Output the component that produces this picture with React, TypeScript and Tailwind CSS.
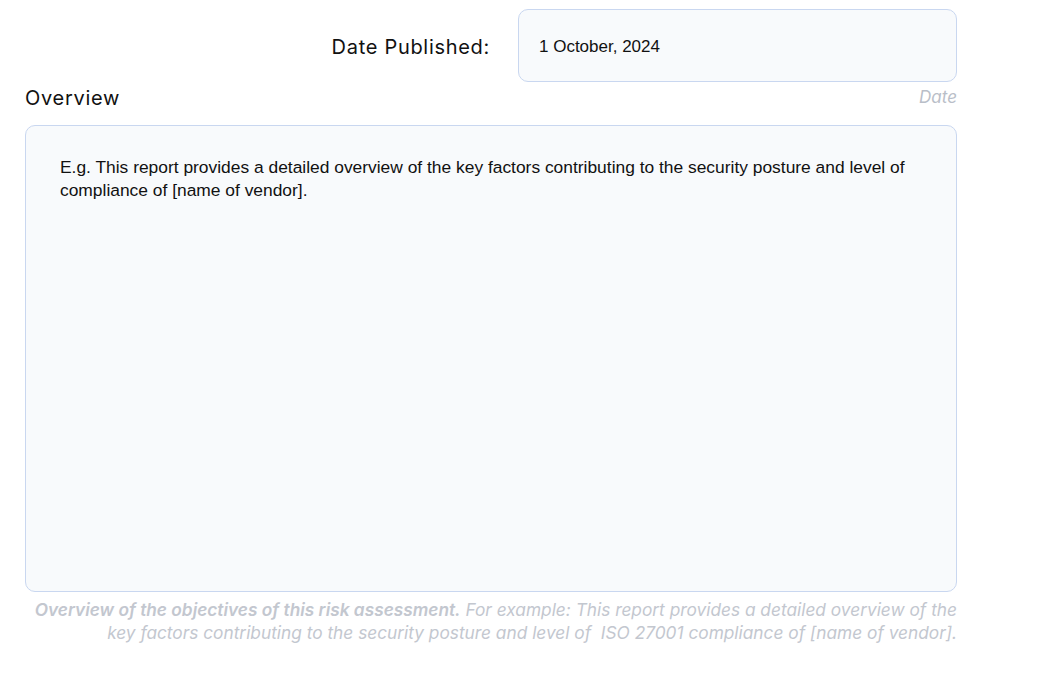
import React from "react";

export default function App() {
  return (
    <div className="min-h-screen bg-white font-['Inter',sans-serif]">
      <div className="ml-[25px] w-[932px] pt-[9px]">
        {/* Date row */}
        <div className="flex items-center justify-end gap-[28px]">
          <label className="mt-[3px] text-[20px] tracking-[0.7px] text-[#111]">Date Published:</label>
          <input
            defaultValue="1 October, 2024"
            className="h-[73px] w-[439px] rounded-[10px] border border-[#c9d7f0] bg-[#f8fafc] px-[20px] pt-[2px] font-['Liberation_Sans',Arial,sans-serif] text-[17px] text-[#111] outline-none"
          />
        </div>

        {/* Overview label + date hint */}
        <div className="mt-[1px] flex items-center justify-between">
          <span className="text-[20px] tracking-[0.7px] text-[#111]">Overview</span>
          <span className="text-[17px] italic text-[#b9bec8]">Date</span>
        </div>

        <textarea
          defaultValue="E.g. This report provides a detailed overview of the key factors contributing to the security posture and level of compliance of [name of vendor]."
          className="mt-[12px] block h-[467px] w-full resize-none rounded-[10px] border border-[#c9d7f0] bg-[#f8fafc] px-[34px] pt-[30px] font-['Liberation_Sans',Arial,sans-serif] text-[17.4px] leading-[23px] text-[#111] outline-none"
        />

        <p className="mt-[6px] text-right text-[17.3px] italic leading-[23px] text-[#c3c7cf]">
          <span className="font-semibold">Overview of the objectives of this risk assessment.</span> For example: This report provides a detailed overview of the key factors contributing to the security posture and level of&nbsp; ISO 27001 compliance of [name of vendor].
        </p>
      </div>
    </div>
  );
}
